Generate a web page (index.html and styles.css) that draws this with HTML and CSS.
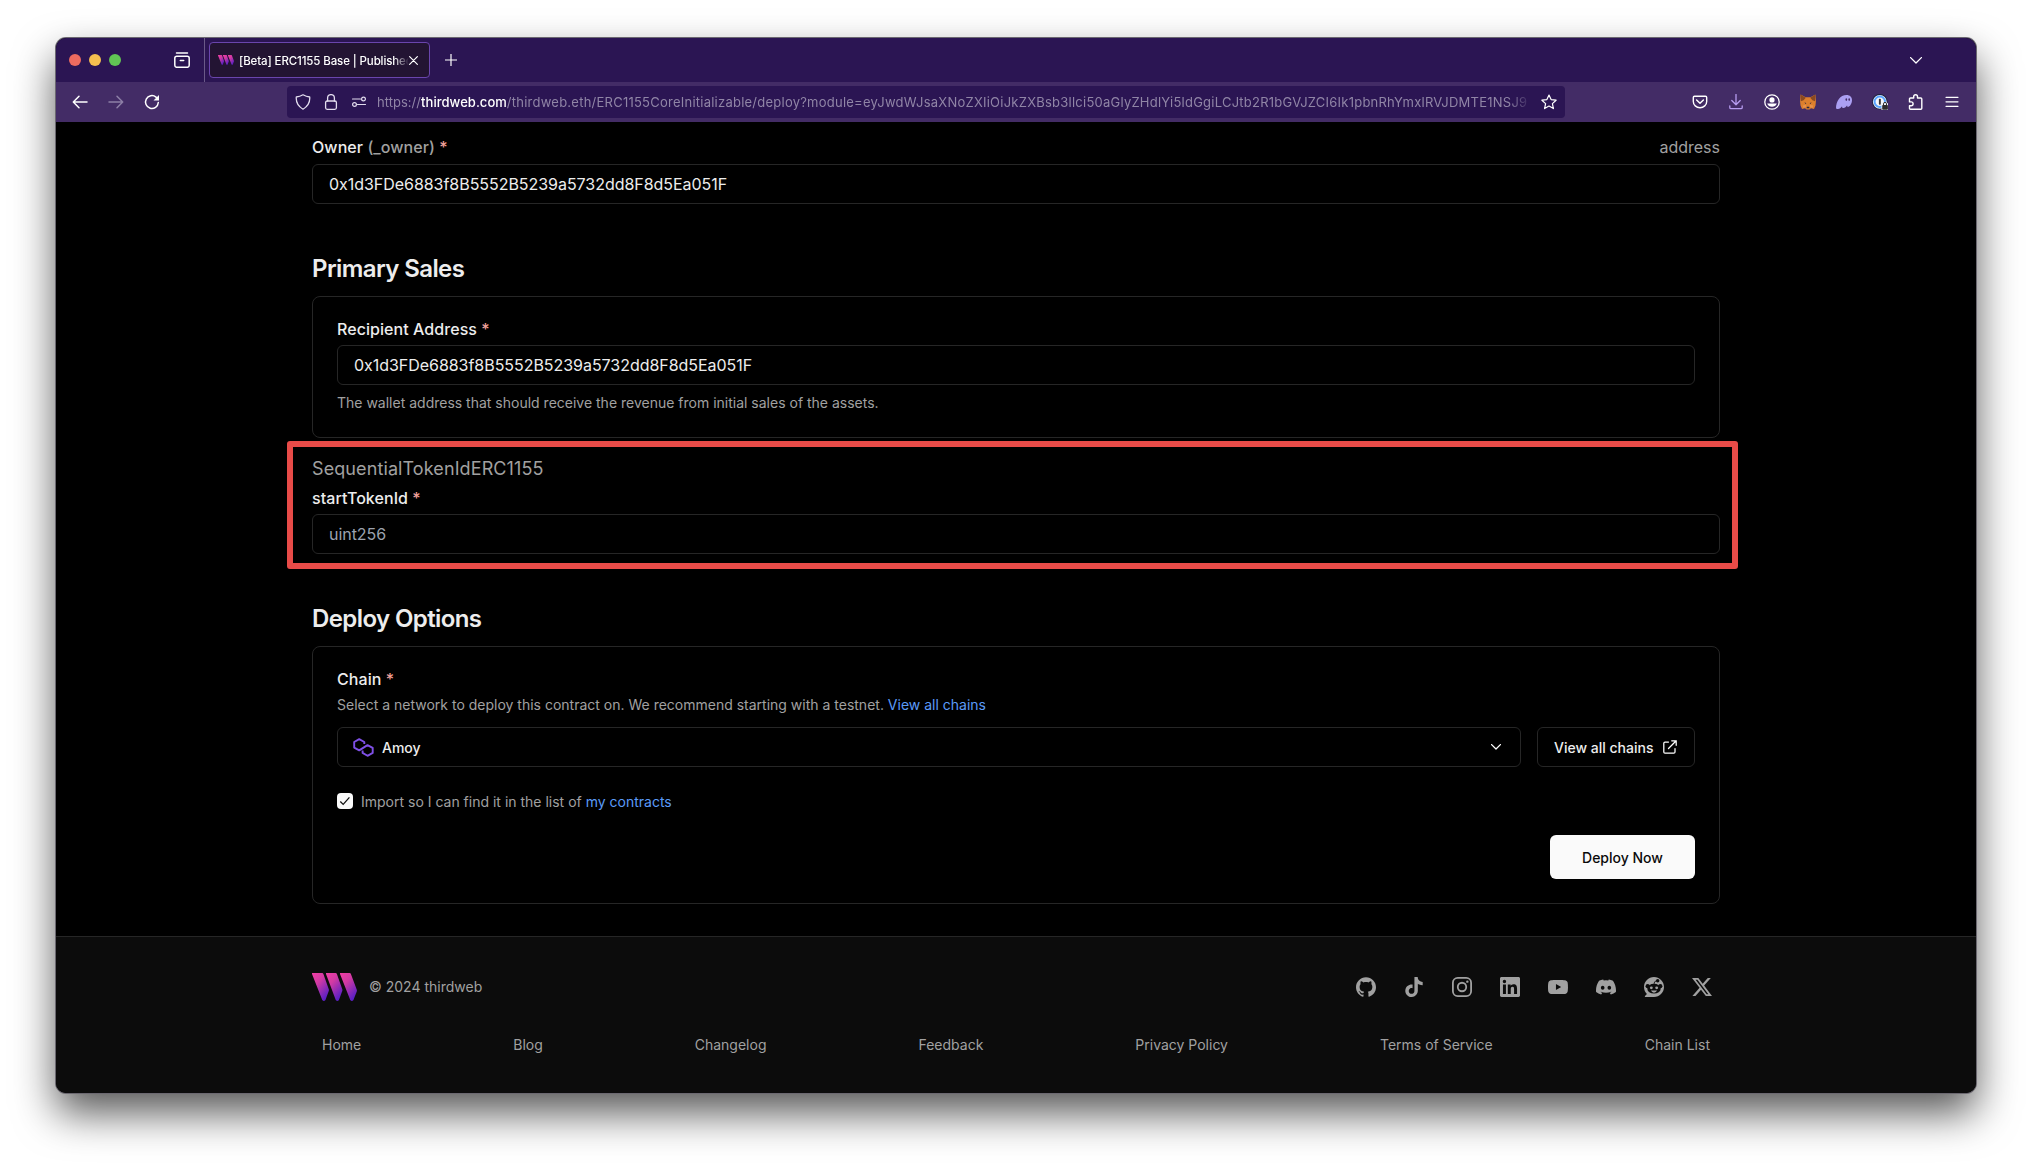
FILE: index.html
```html
<!DOCTYPE html>
<html lang="en">
<head>
<meta charset="utf-8">
<title>[Beta] ERC1155 Base | Published Contract</title>
<link rel="stylesheet" href="styles.css">
</head>
<body>
<svg class="defs" width="0" height="0" aria-hidden="true">
  <defs>
    <linearGradient id="brand" x1="0" y1="0" x2="0.65" y2="1">
      <stop offset="0" stop-color="#f13fa5"/><stop offset="0.4" stop-color="#d23aa3"/><stop offset="1" stop-color="#5a1fc4"/>
    </linearGradient>
    <symbol id="logo" viewBox="0 0 45 28">
      <path fill="url(#brand)" d="M0 0h10.2q.9 0 1.2.9l5.300 15q.4 1 .05 2l-3.300 9q-1.600 2.200-3.200 0L0 1z"/>
      <path fill="url(#brand)" d="M14 0h9.700q.9 0 1.200.9l5.300 15q.4 1 .05 2l-3.300 9q-1.600 2.200-3.200 0L14 1z"/>
      <path fill="url(#brand)" d="M28 0h9.700q.9 0 1.200.9l5.800 15.500q.4 1 .05 2l-3.300 8.500q-1.600 2.200-3.200 0L28 1z"/>
    </symbol>
  </defs>
</svg>
<div class="window">
  <header class="tabbar">
    <div class="lights"><i class="red"></i><i class="yellow"></i><i class="green"></i></div>
    <svg class="ic view" viewBox="0 0 16 16" width="16" height="16"><rect x=".8" y="4.300" width="14.400" height="11" rx="2" stroke-width="1.500"/><path d="M2.500 1h11M6.300 8.500h3.400" stroke-width="1.500"/></svg>
    <div class="tab">
      <svg width="16" height="10" viewBox="0 0 45 28"><use href="#logo"/></svg>
      <span class="tab-title">[Beta] ERC1155 Base | Published</span>
      <svg class="ic" viewBox="0 0 10 10" width="9" height="9"><path d="M.7.7l8.600 8.600M9.300.7L.7 9.300" stroke-width="1.300"/></svg>
    </div>
    <svg class="ic plus" viewBox="0 0 12 12" width="12" height="12"><path d="M6 0v12M0 6h12" stroke-width="1.200"/></svg>
    <svg class="ic chev" viewBox="0 0 12 7" width="12" height="7"><path d="M.6.6L6 6L11.400.6" stroke-width="1.300"/></svg>
  </header>
  <nav class="toolbar">
    <div class="navbtns">
      <svg class="ic" viewBox="0 0 16 16" width="16" height="16"><path d="M15 8H1.500M7 2.300L1.300 8L7 13.700" stroke-width="1.500"/></svg>
      <svg class="ic dim" viewBox="0 0 16 16" width="16" height="16"><path d="M1 8h13.500M9 2.300L14.700 8L9 13.700" stroke-width="1.500"/></svg>
      <svg class="ic" viewBox="0 0 16 16" width="16" height="16"><path d="M14.300 8.500A6.400 6.400 0 1 1 12 3.100l1.500 1.400" stroke-width="1.500"/><path d="M15 1v5.500H9.500z" fill="#fff" stroke="none"/></svg>
    </div>
    <div class="urlbar">
      <svg class="ic soft" viewBox="0 0 16 16" width="16" height="16"><path d="M8 .8Q4.800 2.600 1.300 3Q.6 11 8 15.200Q15.400 11 14.700 3Q11.200 2.600 8 .8z" stroke-width="1.300"/></svg>
      <svg class="ic soft" viewBox="0 0 16 16" width="16" height="16"><rect x="2.600" y="7" width="10.800" height="8.300" rx="1.500" stroke-width="1.300"/><path d="M4.600 7V4a3.400 3.400 0 0 1 6.800 0v3" stroke-width="1.300"/></svg>
      <svg class="ic soft" viewBox="0 0 16 16" width="16" height="16"><circle cx="12.500" cy="5" r="1.900" stroke-width="1.200"/><circle cx="3.500" cy="10.500" r="1.900" stroke-width="1.200"/><path d="M1.500 5h8M6.500 10.500h8" stroke-width="1.200"/></svg>
      <span class="url">https://<b>thirdweb.com</b><span class="path">/thirdweb.eth/ERC1155CoreInitializable/deploy?module=eyJwdWJsaXNoZXIiOiJkZXBsb3llci50aGlyZHdlYi5ldGgiLCJtb2R1bGVJZCI6Ik1pbnRhYmxlRVJDMTE1NSJ9</span></span>
      <svg class="ic" viewBox="0 0 16 16" width="16" height="16"><path d="M8 1l2.100 4.600 5 .6-3.700 3.400 1 5L8 12.100l-4.400 2.500 1-5L.9 6.200l5-.6z" stroke-width="1.200"/></svg>
    </div>
    <div class="ext">
      <svg class="ic" viewBox="0 0 16 16" width="16" height="16"><path d="M2.500 2.300h11q1.200 0 1.200 1.200v4a6.700 6.200 0 0 1-13.400 0v-4q0-1.200 1.200-1.200z" stroke-width="1.400"/><path d="M4.600 6L8 9.200 11.400 6" stroke-width="1.500"/></svg>
      <svg class="ic lilac" viewBox="0 0 16 16" width="16" height="16"><path d="M8 .5v10M3.800 6.500L8 10.700l4.200-4.200M1.800 12v1.500q0 1.200 1.200 1.200h10q1.200 0 1.200-1.200V12" stroke-width="1.300"/></svg>
      <svg class="ic" viewBox="0 0 16 16" width="16" height="16"><circle cx="8" cy="8" r="7.200" stroke-width="1.300"/><circle cx="8" cy="5.900" r="2.600" fill="#fff" stroke="none"/><path d="M3.200 9.600h9.600a5.200 5.200 0 0 1-9.600 0z" fill="#fff" stroke="none"/></svg>
      <svg viewBox="0 0 16 16" width="16" height="16"><path fill="#dd7f2d" d="M.6.400l5 2.800h4.800l5-2.800.5 7-.4 4-1.500 3.600-3-.8-1.600 1.300H6.600L5 14.200l-3 .8L.5 11.400.1 7.400z"/><path fill="#8a4a20" d="M.6.400l5.200 3.400L3.600 6.300 1 7.200zM15.400.4l-5.200 3.400 2.200 2.500 2.600.9z"/><path fill="#e8914a" d="M3 11.500l2.800-.7.7 2.500-3.400.4zM13 11.500l-2.800-.7-.7 2.500 3.400.4z"/><path fill="#2b2540" d="M4.300 8.600l2 .3-.5 1zM11.700 8.600l-2 .3.500 1zM6.800 12.800h2.400l.2 1.500H6.600z"/></svg>
      <svg viewBox="0 0 16 16" width="16" height="16"><path fill="#ab9ff2" d="M0 14.300C0 7 4.200 1 10.500 1 14 1 16 3.200 16 6.200c0 3.300-2.300 6.600-4 6.600-1 0-1-1-.8-1.600-1 1.500-2.300 2.800-3.800 2.800-1.200 0-1.500-1-1.300-1.800C5 13.800 3.500 15 2 15c-1.200 0-2-.2-2-.7z"/><ellipse cx="10.300" cy="5.600" rx=".8" ry="1.300" fill="#432c66"/><ellipse cx="13.200" cy="5.600" rx=".8" ry="1.300" fill="#432c66"/></svg>
      <svg viewBox="0 0 16 16" width="16" height="16"><circle cx="7.800" cy="7.800" r="7.800" fill="#1c2340"/><circle cx="7.800" cy="7.800" r="6.900" fill="#eef3f8"/><circle cx="7.800" cy="7.800" r="5.200" fill="#f4f7fa" stroke="#5aa6ff" stroke-width="2"/><rect x="6.900" y="4.800" width="1.900" height="6" rx=".8" fill="#333"/><path d="M9.500 8.800h2a1.900 1.900 0 0 1 3.500 0l1 .7V16H9.500z" fill="#eef3f8"/><rect x="10.200" y="11" width="5.700" height="4.800" rx=".8" fill="#2d2d2d"/><path d="M11.500 11V9.900a1.500 1.500 0 0 1 3 0V11" fill="none" stroke="#2d2d2d"/></svg>
      <svg class="ic" viewBox="0 0 16 16" width="16" height="16"><path d="M1.500 6.500V5q0-1 1-1h3.200V2.600a1.900 1.900 0 0 1 3.800 0V4h3.300q1 0 1 1v9.200q0 1-1 1H2.500q-1 0-1-1v-2.500h1.700a1.900 1.900 0 0 0 0-3.800H1.500z" stroke-width="1.400"/></svg>
      <svg class="ic" viewBox="0 0 16 16" width="16" height="16"><path d="M2 3.300h12M2 7.800h12M2 12.300h12" stroke-width="1.200"/></svg>
    </div>
  </nav>

  <main class="page">
    <div class="label-row"><label class="label">Owner <span class="muted">(_owner)</span> <em>*</em></label><span class="muted type">address</span></div>
    <div class="input">0x1d3FDe6883f8B5552B5239a5732dd8F8d5Ea051F</div>

    <h2 class="sales">Primary Sales</h2>
    <section class="card">
      <label class="label">Recipient Address <em>*</em></label>
      <div class="input">0x1d3FDe6883f8B5552B5239a5732dd8F8d5Ea051F</div>
      <p class="help">The wallet address that should receive the revenue from initial sales of the assets.</p>
    </section>

    <section class="module">
      <h3>SequentialTokenIdERC1155</h3>
      <label class="label">startTokenId <em>*</em></label>
      <div class="input placeholder">uint256</div>
      <div class="highlight"></div>
    </section>

    <h2 class="options">Deploy Options</h2>
    <section class="card deploy">
      <label class="label">Chain <em>*</em></label>
      <p class="desc">Select a network to deploy this contract on. We recommend starting with a testnet. <a>View all chains</a></p>
      <div class="chain-row">
        <div class="select">
          <svg width="21" height="19" viewBox="0 0 21 19" fill="none" stroke="#7f50e6" stroke-width="1.900" stroke-linejoin="round"><path d="M11.300 5.900V4L6.200 1.200 1.200 4v5.600l5 2.800 8.300-5.300 5.200 2.800v5l-5.200 2.900-4.900-2.900V12.500"/></svg>
          <span>Amoy</span>
          <svg class="ic" viewBox="0 0 10 6" width="10" height="6"><path d="M.6.6L5 5L9.400.6" stroke-width="1.300"/></svg>
        </div>
        <div class="outline-btn">View all chains
          <svg class="ic" viewBox="0 0 14 14" width="14" height="14"><path d="M8.700.8h4.500v4.500M13.200.8L5.500 8.500M5.500 2H2Q.8 2 .8 3.200V12q0 1.200 1.200 1.200h8.800q1.200 0 1.200-1.200V8.500" stroke-width="1.250"/></svg>
        </div>
      </div>
      <div class="check-row">
        <span class="checkbox"><svg viewBox="0 0 16 16" width="16" height="16"><path d="M3.300 8.500l2.900 2.900 6.200-7" fill="none" stroke="#111" stroke-width="1.300"/></svg></span>
        <span>Import so I can find it in the list of <a>my contracts</a></span>
      </div>
      <div class="actions"><button class="primary">Deploy Now</button></div>
    </section>
  </main>

  <footer class="footer">
    <div class="foot-top">
      <div class="brand"><svg width="45" height="28" viewBox="0 0 45 28"><use href="#logo"/></svg><span>© 2024 thirdweb</span></div>
      <div class="social">
        <svg viewBox="0 0 24 24"><path d="M12 .297c-6.630 0-12 5.373-12 12 0 5.303 3.438 9.800 8.205 11.385.6.113.82-.258.82-.577 0-.285-.01-1.040-.015-2.040-3.338.724-4.042-1.610-4.042-1.610C4.422 18.070 3.633 17.700 3.633 17.700c-1.087-.744.084-.729.084-.729 1.205.084 1.838 1.236 1.838 1.236 1.070 1.835 2.809 1.305 3.495.998.108-.776.417-1.305.76-1.605-2.665-.3-5.466-1.332-5.466-5.930 0-1.310.465-2.380 1.235-3.220-.135-.303-.54-1.523.105-3.176 0 0 1.005-.322 3.300 1.230.96-.267 1.980-.399 3-.405 1.020.006 2.040.138 3 .405 2.280-1.552 3.285-1.230 3.285-1.230.645 1.653.24 2.873.12 3.176.765.840 1.230 1.910 1.230 3.220 0 4.610-2.805 5.625-5.475 5.920.42.360.81 1.096.81 2.220 0 1.606-.015 2.896-.015 3.286 0 .315.210.690.825.570C20.565 22.092 24 17.592 24 12.297c0-6.627-5.373-12-12-12"/></svg>
        <svg viewBox="0 0 24 24"><path d="M12.525.02c1.310-.02 2.610-.01 3.910-.02.080 1.530.630 3.090 1.750 4.170 1.120 1.110 2.700 1.620 4.240 1.790v4.030c-1.440-.05-2.890-.35-4.200-.97-.57-.26-1.100-.59-1.620-.93-.01 2.920.010 5.840-.02 8.750-.08 1.400-.54 2.790-1.350 3.940-1.310 1.920-3.580 3.170-5.910 3.210-1.430.080-2.860-.31-4.080-1.030-2.020-1.190-3.440-3.370-3.650-5.710-.02-.5-.03-1-.01-1.490.18-1.900 1.120-3.720 2.580-4.960 1.660-1.440 3.980-2.130 6.150-1.720.020 1.480-.04 2.960-.04 4.440-.99-.32-2.150-.23-3.020.370-.63.410-1.110 1.040-1.360 1.750-.21.510-.15 1.070-.14 1.610.24 1.640 1.820 3.020 3.500 2.870 1.120-.01 2.190-.66 2.770-1.610.19-.33.4-.67.410-1.060.1-1.790.060-3.570.070-5.360.010-4.030-.01-8.050.020-12.070z"/></svg>
        <svg viewBox="0 0 24 24"><g fill="none" stroke="#a1a1a1" stroke-width="2.160"><rect x="1.080" y="1.080" width="21.840" height="21.840" rx="5.800"/><circle cx="12" cy="12" r="5.080"/></g><circle cx="18.400" cy="5.600" r="1.440"/></svg>
        <svg viewBox="0 0 24 24"><path d="M20.447 20.452h-3.554v-5.569c0-1.328-.027-3.037-1.852-3.037-1.853 0-2.136 1.445-2.136 2.939v5.667H9.351V9h3.414v1.561h.046c.477-.9 1.637-1.850 3.370-1.850 3.601 0 4.267 2.370 4.267 5.455v6.286zM5.337 7.433a2.062 2.062 0 0 1-2.063-2.065 2.064 2.064 0 1 1 2.063 2.065zm1.782 13.019H3.555V9h3.564v11.452zM22.225 0H1.771C.792 0 0 .774 0 1.729v20.542C0 23.227.792 24 1.771 24h20.451C23.200 24 24 23.227 24 22.271V1.729C24 .774 23.200 0 22.222 0h.003z"/></svg>
        <svg viewBox="0 0 24 24"><path d="M23.498 6.186a3.016 3.016 0 0 0-2.122-2.136C19.505 3.545 12 3.545 12 3.545s-7.505 0-9.377.505A3.017 3.017 0 0 0 .502 6.186C0 8.070 0 12 0 12s0 3.930.502 5.814a3.016 3.016 0 0 0 2.122 2.136c1.871.505 9.376.505 9.376.505s7.505 0 9.377-.505a3.015 3.015 0 0 0 2.122-2.136C24 15.930 24 12 24 12s0-3.930-.502-5.814zM9.545 15.568V8.432L15.818 12l-6.273 3.568z"/></svg>
        <svg viewBox="0 0 24 24"><path d="M20.317 4.370a19.791 19.791 0 0 0-4.885-1.515.074.074 0 0 0-.079.037c-.21.375-.444.864-.608 1.250a18.270 18.270 0 0 0-5.487 0 12.640 12.640 0 0 0-.617-1.250.077.077 0 0 0-.079-.037A19.736 19.736 0 0 0 3.677 4.370a.070.070 0 0 0-.032.027C.533 9.046-.32 13.580.099 18.058a.082.082 0 0 0 .031.057 19.900 19.900 0 0 0 5.993 3.030.078.078 0 0 0 .084-.028 14.090 14.090 0 0 0 1.226-1.994.076.076 0 0 0-.041-.106 13.107 13.107 0 0 1-1.872-.892.077.077 0 0 1-.008-.128 10.200 10.200 0 0 0 .372-.292.074.074 0 0 1 .077-.010c3.928 1.793 8.180 1.793 12.062 0a.074.074 0 0 1 .078.010c.12.098.246.198.373.292a.077.077 0 0 1-.006.127 12.299 12.299 0 0 1-1.873.892.077.077 0 0 0-.041.107c.36.698.772 1.362 1.225 1.993a.076.076 0 0 0 .084.028 19.839 19.839 0 0 0 6.002-3.030.077.077 0 0 0 .032-.054c.5-5.177-.838-9.674-3.549-13.660a.061.061 0 0 0-.031-.030zM8.020 15.330c-1.183 0-2.157-1.085-2.157-2.419 0-1.333.956-2.419 2.157-2.419 1.210 0 2.176 1.096 2.157 2.420 0 1.333-.956 2.418-2.157 2.418zm7.975 0c-1.183 0-2.157-1.085-2.157-2.419 0-1.333.955-2.419 2.157-2.419 1.210 0 2.176 1.096 2.157 2.420 0 1.333-.946 2.418-2.157 2.418z"/></svg>
        <svg viewBox="0 0 24 24"><path d="M12 0C5.370 0 0 5.370 0 12c0 3.300 1.350 6.300 3.500 8.500L1.200 22.800C.8 23.300 1.100 24 1.700 24H12c6.630 0 12-5.370 12-12S18.630 0 12 0z"/><g fill="#0c0c0c"><circle cx="4.400" cy="11" r="2.500"/><circle cx="19.600" cy="11" r="2.500"/><ellipse cx="12" cy="14" rx="8" ry="5.900"/><circle cx="16.400" cy="4.500" r="2.100"/></g><path d="M12 8.500q0-3.500 3-4" fill="none" stroke="#0c0c0c"/><circle cx="8.800" cy="13" r="1.700"/><circle cx="15.200" cy="13" r="1.700"/><path d="M8.300 16.300h7.400q-1.100 2.500-3.700 2.500t-3.700-2.500z"/></svg>
        <svg viewBox="0 0 24 24"><path d="M18.901 1.153h3.680l-8.040 9.190L24 22.846h-7.406l-5.800-7.584-6.638 7.584H.474l8.600-9.830L0 1.154h7.594l5.243 6.932ZM17.610 20.644h2.039L6.486 3.240H4.298Z"/></svg>
      </div>
    </div>
    <div class="foot-links"><span>Home</span><span>Blog</span><span>Changelog</span><span>Feedback</span><span>Privacy Policy</span><span>Terms of Service</span><span>Chain List</span></div>
  </footer>
</div>
</body>
</html>
```
FILE: styles.css
```css
* { box-sizing: border-box; margin: 0; }
body { background: #fff; font-family: Inter, sans-serif; color: #ededed; height: 1167px; padding: 38px 56px; overflow: hidden; }
svg { display: block; flex: none; }
.defs { position: absolute; }
.window { position: relative; width: 1920px; height: 1055px; border-radius: 10px; background: #000; box-shadow: 0 0 0 1px #6b6870, 0 20px 42px rgba(0,0,0,.66); display: flex; flex-direction: column; overflow: hidden; }
.ic { fill: none; stroke: #fff; stroke-linejoin: round; stroke-linecap: round; }
.ic.dim { stroke: #8d7fa6; }
.ic.soft { stroke: #e2dcee; }
.ic.lilac { stroke: #b79cf0; }

.tabbar { height: 44px; background: #2b1553; display: flex; align-items: center; flex: none; }
.lights { display: flex; gap: 8px; padding-left: 13px; width: 118px; }
.lights i { width: 12px; height: 12px; border-radius: 50%; }
.red { background: #ed6b5f; }
.yellow { background: #f5bf4f; }
.green { background: #61c554; }
.tab { display: flex; align-items: center; width: 221px; height: 36px; margin-left: 19px; padding: 0 11px 0 8px; border: 1px solid #6a45ad; border-radius: 4px; background: #231433; position: relative; }
.tab::before { content: ""; position: absolute; left: -6px; top: -5px; width: 1px; height: 44px; background: #6a5a88; }
.tab-title { flex: 1; min-width: 0; margin-left: 5px; padding-top: 1px; font-size: 11.500px; font-weight: 500; letter-spacing: -.12px; color: #fff; white-space: nowrap; overflow: hidden; -webkit-mask-image: linear-gradient(90deg,#000 91%,transparent 100%); mask-image: linear-gradient(90deg,#000 91%,transparent 100%); }
.plus { margin-left: 15px; }
.chev { margin-left: auto; margin-right: 54px; }

.toolbar { height: 40px; background: #432c66; display: flex; align-items: center; flex: none; }
.navbtns { display: flex; gap: 20px; width: 231px; padding-left: 16px; }
.urlbar { width: 1278px; height: 32px; border-radius: 4px; background: #2b1553; display: flex; align-items: center; padding: 0 8px; gap: 12px; }
.url { flex: 1; min-width: 0; margin: 0 -3px 0 -2px; font-size: 13px; letter-spacing: .03px; color: #9085a6; white-space: nowrap; overflow: hidden; -webkit-mask-image: linear-gradient(90deg,#000 98%,transparent 100%); mask-image: linear-gradient(90deg,#000 98%,transparent 100%); }
.url b { font-weight: 500; color: #fff; }
.path { letter-spacing: .24px; }
.ext { display: flex; gap: 20px; margin-left: auto; margin-right: 16px; }

.page { flex: 1; width: 1408px; margin-left: 256px; padding-top: 17px; }
.label-row { display: flex; justify-content: space-between; margin-bottom: 9px; height: 16px; align-items: center; }
.label { display: block; font-size: 16px; line-height: 16px; font-weight: 500; letter-spacing: .06px; color: #ededed; white-space: nowrap; }
.label em { font-style: normal; color: #f2a09a; }
.muted { color: #a1a1a1; }
.type { font-size: 16px; line-height: 16px; }
.input { height: 40px; border: 1px solid #262626; border-radius: 6px; padding: 0 16px; font-size: 16px; line-height: 38px; letter-spacing: -.04px; color: #ededed; }
.placeholder { color: #9ca3af; }
h2 { font-size: 24px; line-height: 32px; font-weight: 600; letter-spacing: -.6px; color: #ededed; }
.sales { margin: 49px 0 11px; }
.card { border: 1px solid #262626; border-radius: 8px; padding: 24px; }
.card .label { margin-bottom: 8px; }
.help { margin-top: 8px; font-size: 14px; line-height: 20px; color: #a1a1a1; }
.module { position: relative; padding-top: 17px; }
.module h3 { font-size: 18px; line-height: 28px; font-weight: 400; letter-spacing: .1px; color: #a1a1a1; }
.module .label { margin: 7px 0 8px; }
.highlight { position: absolute; left: -25px; right: -18px; top: 3px; bottom: -15px; border: 6px solid #e84b48; border-radius: 3px; }
.options { margin: 49px 0 11px; }
.deploy { height: 258px; }
.deploy p.desc { font-size: 14px; line-height: 20px; color: #a1a1a1; margin-bottom: 12px; }
a { color: #5b9bf8; }
.deploy .label { margin-bottom: 8px; }
.chain-row { display: flex; gap: 16px; }
.select { flex: 1; height: 40px; border: 1px solid #262626; border-radius: 6px; display: flex; align-items: center; gap: 8px; padding: 0 19px 0 15px; font-size: 14px; font-weight: 500; }
.select .ic { margin-left: auto; }
.outline-btn { width: 158px; height: 40px; border: 1px solid #262626; border-radius: 6px; display: flex; align-items: center; justify-content: space-between; padding: 0 17px 0 16px; font-size: 14px; font-weight: 500; }
.check-row { display: flex; align-items: center; gap: 8px; height: 20px; margin-top: 24px; font-size: 14px; color: #a1a1a1; }
.checkbox { width: 16px; height: 16px; border-radius: 4px; background: #fafafa; }
.actions { display: flex; justify-content: flex-end; margin-top: 24px; }
.primary { width: 145px; height: 44px; border: 0; border-radius: 6px; background: #fafafa; color: #0a0a0a; font: 500 14px Inter, sans-serif; }

.footer { height: 157px; flex: none; background: #0c0c0c; border-top: 1px solid #262626; padding: 35px 256px 0 256px; font-size: 14px; color: #a1a1a1; }
.foot-top { display: flex; justify-content: space-between; align-items: center; height: 30px; }
.brand { display: flex; align-items: center; gap: 12px; }
.brand span { margin-top: -1px; }
.social { display: flex; gap: 28px; padding-right: 8px; }
.social svg { width: 20px; height: 20px; fill: #a1a1a1; }
.foot-links { display: flex; justify-content: space-between; padding: 0 10px; margin-top: 33px; line-height: 20px; }
```
